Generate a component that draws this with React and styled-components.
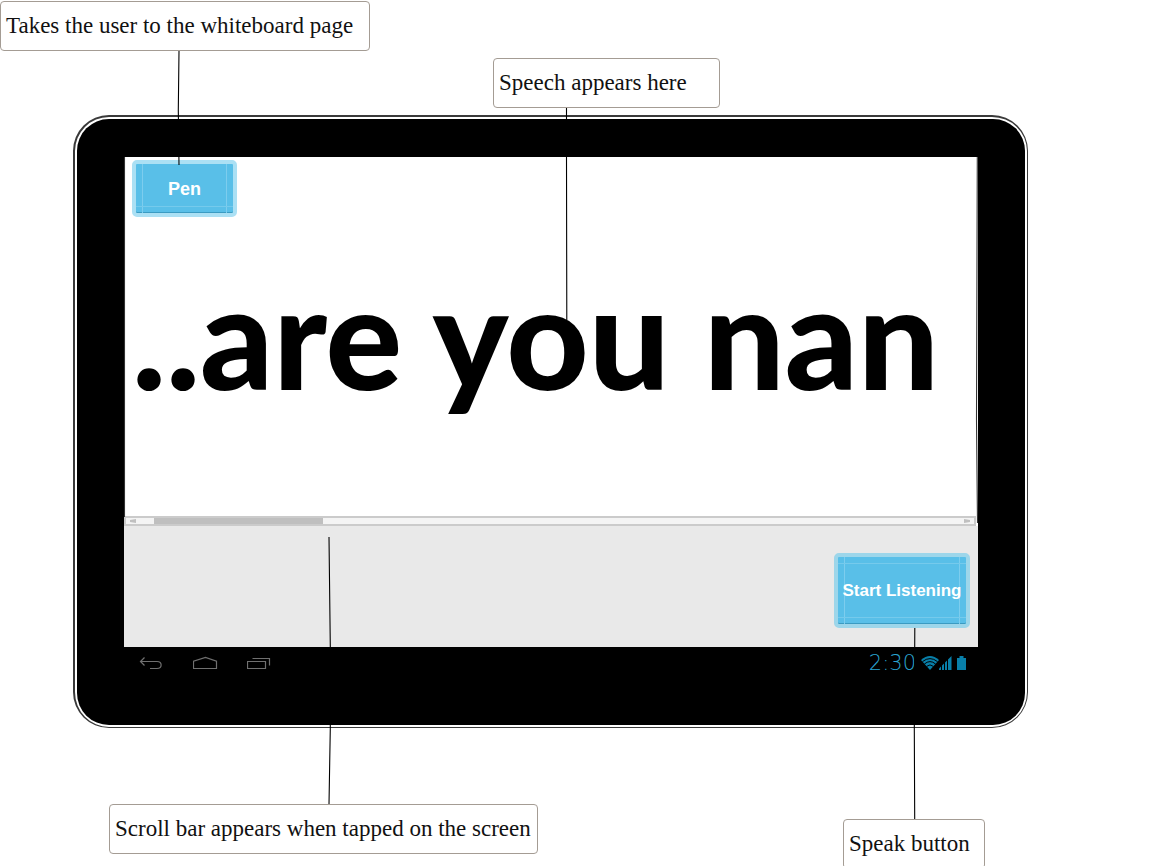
import React from "react";
import styled, { createGlobalStyle } from "styled-components";

const GlobalStyle = createGlobalStyle`
  *, *::before, *::after { box-sizing: border-box; }
  body { margin: 0; background: #fff; color: #000; }
`;

const Canvas = styled.main`
  position: relative;
  min-height: 100vh;
  padding: 115px 145px 0 73px;
  overflow: hidden;
`;

/* Notes pinned on the canvas around the device */
const Note = styled.p`
  position: absolute;
  left: ${(p) => p.$x}px;
  top: ${(p) => p.$y}px;
  width: ${(p) => p.$w}px;
  height: 50px;
  margin: 0;
  padding: 0 5px;
  border: 1px solid #a49c94;
  border-radius: 4px;
  background: #fff;
  color: #111;
  font: 23px/48px "Liberation Serif", "Times New Roman", serif;
  white-space: nowrap;
`;

const Connectors = styled.svg`
  position: absolute;
  left: 0;
  top: 0;
  pointer-events: none;
`;

const Tablet = styled.section`
  padding: 2px;
  border: solid #3a3a3a;
  border-width: 2px 1px 1px 2px;
  border-radius: 36px;
`;

const Bezel = styled.div`
  padding: 38px 47px 46px;
  border-radius: 32px;
  background: #000;
`;

const Board = styled.div`
  height: 359px;
  padding: 3px 8px;
  background: #fff;
  overflow: hidden;
`;

const Speech = styled.h1`
  margin: 18px 0 0;
  font: 900 143px/200px Lato, Carlito, sans-serif;
  white-space: nowrap;
`;

const ActionButton = styled.button`
  position: relative;
  isolation: isolate;
  display: block;
  width: ${(p) => p.$w}px;
  height: ${(p) => p.$h}px;
  padding: 0;
  border: 4px solid ${(p) => p.$edge};
  border-radius: 5px;
  background: #59bfe8;
  box-shadow: inset 0 -1px #3b9bc2;
  color: #fff;
  font: bold ${(p) => p.$size}px/20px "Liberation Sans", Arial, sans-serif;
  white-space: nowrap;

  &::before {
    content: "";
    position: absolute;
    z-index: -1;
    inset: 0 6px;
    border: solid #7dcdee;
    border-width: 0 1px;
  }

  &::after {
    content: "";
    position: absolute;
    z-index: -1;
    inset: 6px 0;
    border: solid #75caec;
    border-width: ${(p) => (p.$topLine ? "1px 0" : "0 0 1px")};
  }
`;

const ScrollBar = styled.div`
  display: flex;
  height: 10px;
  margin-right: 2px;
  border: 2px solid #cbcbcb;
  background: #f4f4f4;
  box-shadow: 2px 0 #fff;
`;

const ScrollArrow = styled.button`
  display: flex;
  align-items: center;
  justify-content: ${(p) => (p.$end ? "flex-end" : "flex-start")};
  width: 28px;
  padding: 0 4px;
  border: 0;
  background: none;
`;

const ScrollTrack = styled.div`
  flex: 1;
`;

const ScrollThumb = styled.div`
  width: 169px;
  height: 6px;
  background: #bfbfbf;
`;

const Controls = styled.div`
  display: flex;
  justify-content: flex-end;
  height: 121px;
  padding: 27px 8px 0;
  background: #e9e9e9;
`;

const StatusBar = styled.footer`
  display: flex;
  align-items: center;
  justify-content: space-between;
  height: 32px;
  padding: 0 11px 0 15px;
`;

const NavGroup = styled.nav`
  display: flex;
  gap: 28px;
`;

const NavButton = styled.button`
  display: flex;
  padding: 0;
  border: 0;
  background: none;
`;

const Indicators = styled.div`
  display: flex;
  align-items: center;
  gap: 5px;
`;

const Clock = styled.time`
  color: #2aa3d0;
  font: 200 21px/32px "DejaVu Sans", sans-serif;
`;

function Arrow({ flip }) {
  return (
    <svg width="6" height="4" viewBox="0 0 6 4" aria-hidden="true">
      <path d={flip ? "M0 0 6 1V3L0 4Z" : "M6 0 0 1V3L6 4Z"} fill="#c0c0c0" />
    </svg>
  );
}

function NavIcon({ d }) {
  return (
    <svg width="26" height="16" viewBox="0 0 26 16" fill="none" stroke="#707070" strokeWidth="1.2" aria-hidden="true">
      <path d={d} />
    </svg>
  );
}

const navItems = [
  { label: "Back", d: "M5.5 2.5 1.5 6.5l4 4M1.5 6.5H18C23.5 6.5 23.5 13.5 18 13.5H11" },
  { label: "Home", d: "M.5 13.5V6.3L12.5 2.5 23.5 6.3V13.5Z" },
  { label: "Recent apps", d: "M.5 6.5H18.5V13.5H.5ZM5.5 3.5H22.5V10.5" },
];

const notes = [
  { x: 0, y: 1, w: 370, text: "Takes the user to the whiteboard page" },
  { x: 493, y: 58, w: 227, text: "Speech appears here" },
  { x: 109, y: 804, w: 429, text: "Scroll bar appears when tapped on the screen" },
  { x: 843, y: 819, w: 142, text: "Speak button" },
];

export default function App() {
  return (
    <Canvas>
      <GlobalStyle />
      <Tablet>
        <Bezel>
          <Board>
            <ActionButton type="button" $w={105} $h={57} $size={18} $edge="#abe0f4">
              Pen
            </ActionButton>
            <Speech>..are you nan</Speech>
          </Board>
          <ScrollBar>
            <ScrollArrow type="button" aria-label="Scroll left">
              <Arrow />
            </ScrollArrow>
            <ScrollTrack>
              <ScrollThumb />
            </ScrollTrack>
            <ScrollArrow type="button" aria-label="Scroll right" $end>
              <Arrow flip />
            </ScrollArrow>
          </ScrollBar>
          <Controls>
            <ActionButton type="button" $w={136} $h={75} $size={17} $edge="#9dd6ea" $topLine>
              Start Listening
            </ActionButton>
          </Controls>
          <StatusBar>
            <NavGroup aria-label="System">
              {navItems.map((item) => (
                <NavButton key={item.label} type="button" aria-label={item.label}>
                  <NavIcon d={item.d} />
                </NavButton>
              ))}
            </NavGroup>
            <Indicators>
              <Clock>2:30</Clock>
              <svg width="46" height="16" viewBox="0 0 46 16" fill="#087fa9" aria-label="Wi-Fi, signal and battery">
                <path d="M0 5Q9 -3 18 5L9 15Z" />
                <path d="M1.5 6.6Q9 0.6 16.5 6.6M3.4 9Q9 4.2 14.6 9M5.6 11.4Q9 8.4 12.4 11.4" fill="none" stroke="#000" strokeWidth="1" />
                <path d="M18 15V13.5L30.5 1V15Z" />
                <path d="M20.5 8V15M23.5 6V15M26.5 3V15" stroke="#000" strokeWidth="1" />
                <path d="M36 3H38.5V1H42.5V3H45V15H36Z" />
              </svg>
            </Indicators>
          </StatusBar>
        </Bezel>
      </Tablet>
      {notes.map((n) => (
        <Note key={n.text} $x={n.x} $y={n.y} $w={n.w}>
          {n.text}
        </Note>
      ))}
      <Connectors width="1173" height="866" fill="none" stroke="#000" strokeWidth="1.1" aria-hidden="true">
        <path d="M179 51 178.3 110 179 165" />
        <path d="M566.5 108V157L566.8 320" />
        <path d="M329 537 330.3 647V728L329 804" />
        <path d="M914.8 628 914.3 728 914.7 819" />
        <path d="M124.5 157V517M977.3 157 976.5 420 977.5 523" stroke="#333" />
      </Connectors>
    </Canvas>
  );
}
